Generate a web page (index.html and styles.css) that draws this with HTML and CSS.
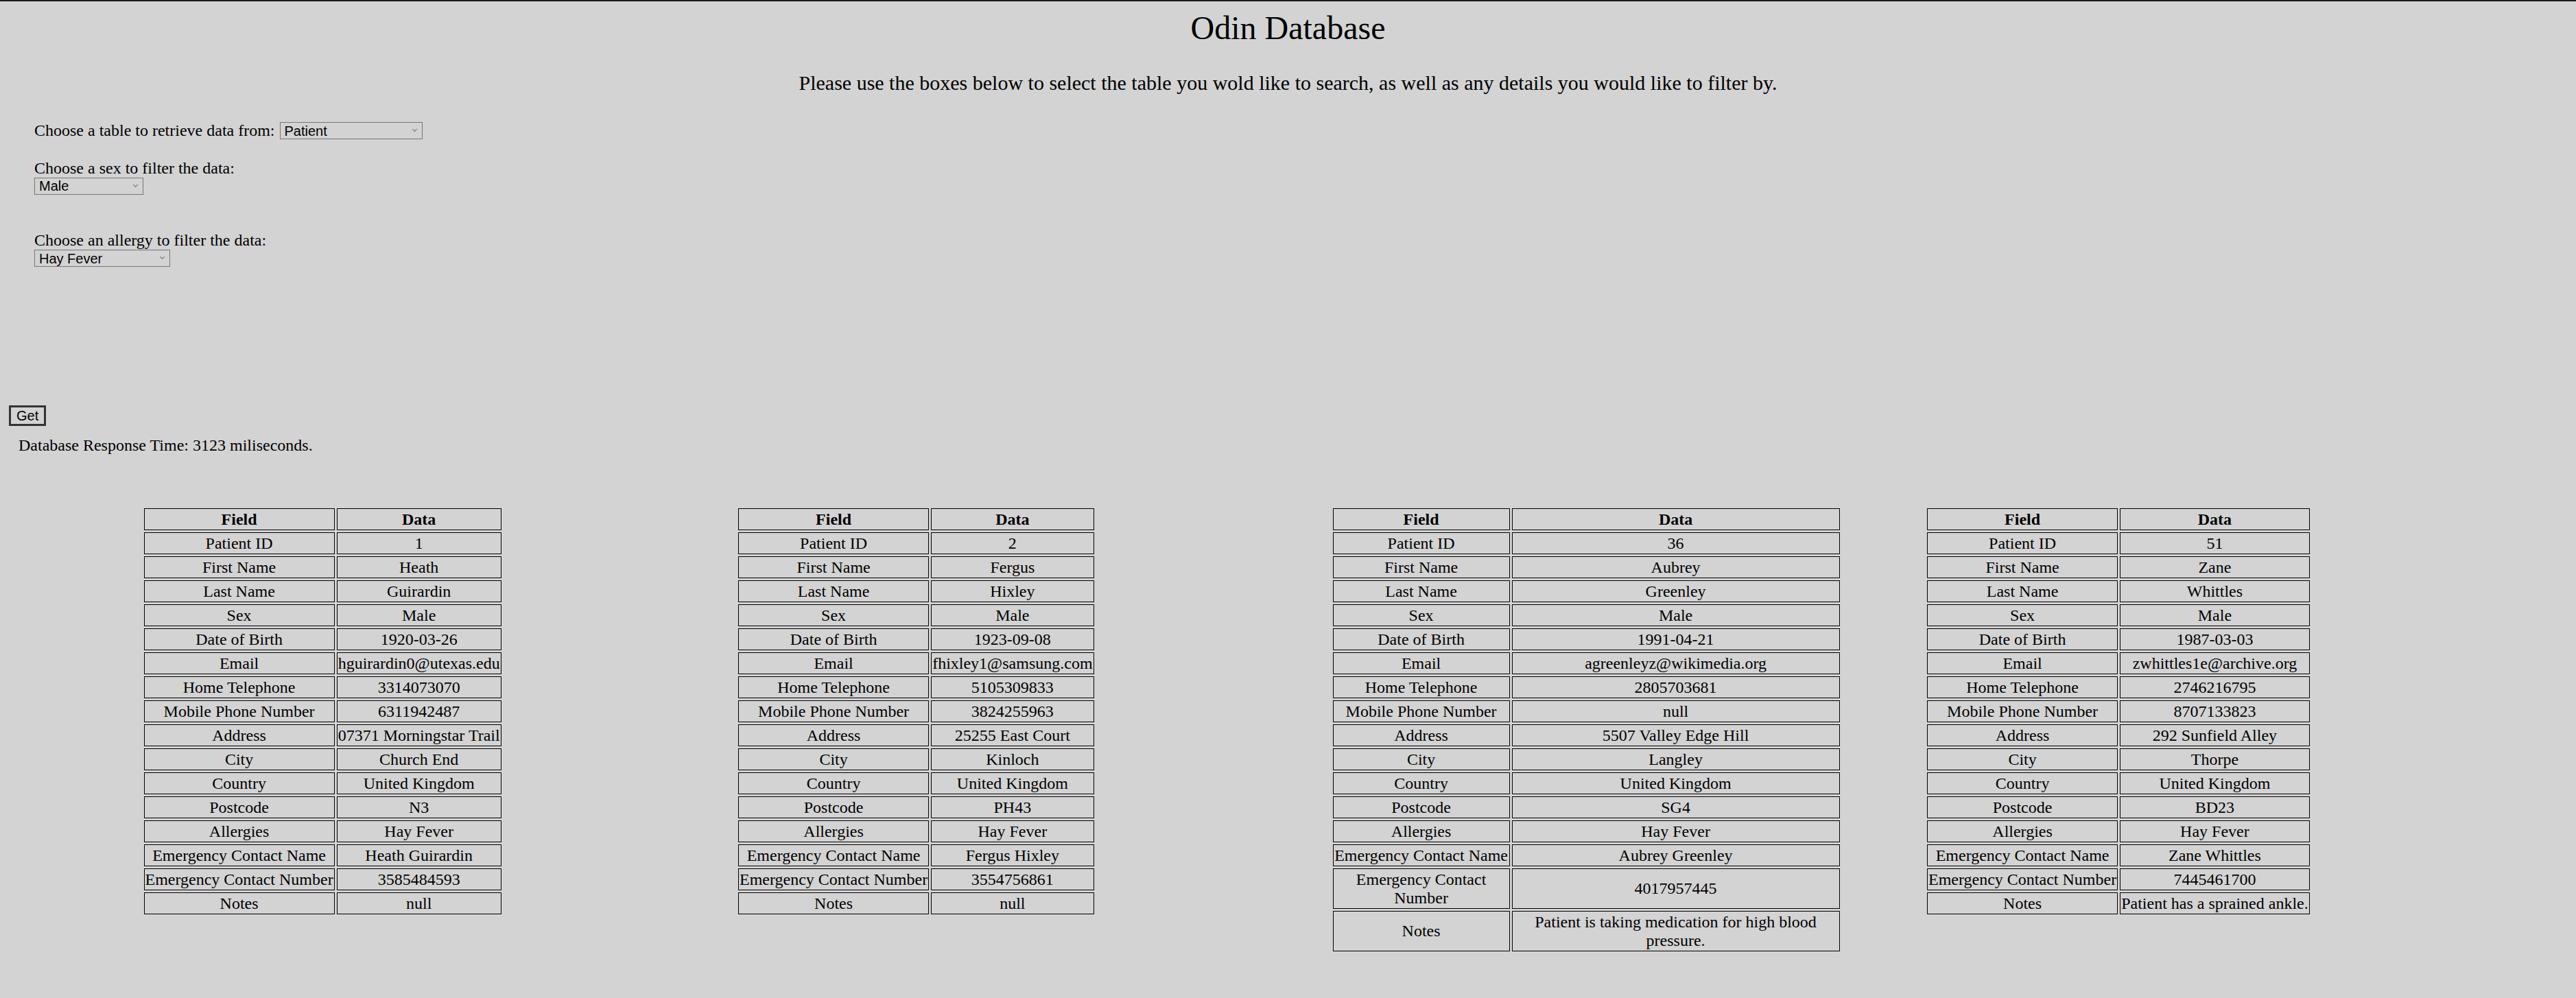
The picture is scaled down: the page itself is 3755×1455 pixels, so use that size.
FILE: index.html
```html
<!DOCTYPE html>
<html lang="en">
<head>
<meta charset="utf-8">
<title>Odin Database</title>
<link rel="stylesheet" href="styles.css">
</head>
<body>
<h1 class="title">Odin Database</h1>
<p class="intro">Please use the boxes below to select the table you wold like to search, as well as any details you would like to filter by.</p>

<form class="filters">
  <div class="row-inline">
    <label for="tbl">Choose a table to retrieve data from:</label>
    <span class="sel-wrap"><select id="tbl" class="sel sel-table"><option>Patient</option></select></span>
  </div>
  <div class="row-block row-sex">
    <label for="sex">Choose a sex to filter the data:</label>
    <span class="sel-wrap"><select id="sex" class="sel sel-sex"><option>Male</option></select></span>
  </div>
  <div class="row-block row-allergy">
    <label for="allergy">Choose an allergy to filter the data:</label>
    <span class="sel-wrap"><select id="allergy" class="sel sel-allergy"><option>Hay Fever</option></select></span>
  </div>
</form>

<button class="get-btn" type="button">Get</button>
<p class="response">Database Response Time: 3123 miliseconds.</p>

<div class="results">
  <div class="result-col">
    <table class="record">
      <tr><th>Field</th><th>Data</th></tr>
      <tr><td>Patient ID</td><td>1</td></tr>
      <tr><td>First Name</td><td>Heath</td></tr>
      <tr><td>Last Name</td><td>Guirardin</td></tr>
      <tr><td>Sex</td><td>Male</td></tr>
      <tr><td>Date of Birth</td><td>1920-03-26</td></tr>
      <tr><td>Email</td><td>hguirardin0@utexas.edu</td></tr>
      <tr><td>Home Telephone</td><td>3314073070</td></tr>
      <tr><td>Mobile Phone Number</td><td>6311942487</td></tr>
      <tr><td>Address</td><td>07371 Morningstar Trail</td></tr>
      <tr><td>City</td><td>Church End</td></tr>
      <tr><td>Country</td><td>United Kingdom</td></tr>
      <tr><td>Postcode</td><td>N3</td></tr>
      <tr><td>Allergies</td><td>Hay Fever</td></tr>
      <tr><td>Emergency Contact Name</td><td>Heath Guirardin</td></tr>
      <tr><td>Emergency Contact Number</td><td>3585484593</td></tr>
      <tr><td>Notes</td><td>null</td></tr>
    </table>
  </div>
  <div class="result-col">
    <table class="record">
      <tr><th>Field</th><th>Data</th></tr>
      <tr><td>Patient ID</td><td>2</td></tr>
      <tr><td>First Name</td><td>Fergus</td></tr>
      <tr><td>Last Name</td><td>Hixley</td></tr>
      <tr><td>Sex</td><td>Male</td></tr>
      <tr><td>Date of Birth</td><td>1923-09-08</td></tr>
      <tr><td>Email</td><td>fhixley1@samsung.com</td></tr>
      <tr><td>Home Telephone</td><td>5105309833</td></tr>
      <tr><td>Mobile Phone Number</td><td>3824255963</td></tr>
      <tr><td>Address</td><td>25255 East Court</td></tr>
      <tr><td>City</td><td>Kinloch</td></tr>
      <tr><td>Country</td><td>United Kingdom</td></tr>
      <tr><td>Postcode</td><td>PH43</td></tr>
      <tr><td>Allergies</td><td>Hay Fever</td></tr>
      <tr><td>Emergency Contact Name</td><td>Fergus Hixley</td></tr>
      <tr><td>Emergency Contact Number</td><td>3554756861</td></tr>
      <tr><td>Notes</td><td>null</td></tr>
    </table>
  </div>
  <div class="result-col">
    <table class="record">
      <tr><th>Field</th><th>Data</th></tr>
      <tr><td>Patient ID</td><td>36</td></tr>
      <tr><td>First Name</td><td>Aubrey</td></tr>
      <tr><td>Last Name</td><td>Greenley</td></tr>
      <tr><td>Sex</td><td>Male</td></tr>
      <tr><td>Date of Birth</td><td>1991-04-21</td></tr>
      <tr><td>Email</td><td>agreenleyz@wikimedia.org</td></tr>
      <tr><td>Home Telephone</td><td>2805703681</td></tr>
      <tr><td>Mobile Phone Number</td><td>null</td></tr>
      <tr><td>Address</td><td>5507 Valley Edge Hill</td></tr>
      <tr><td>City</td><td>Langley</td></tr>
      <tr><td>Country</td><td>United Kingdom</td></tr>
      <tr><td>Postcode</td><td>SG4</td></tr>
      <tr><td>Allergies</td><td>Hay Fever</td></tr>
      <tr><td>Emergency Contact Name</td><td>Aubrey Greenley</td></tr>
      <tr><td>Emergency Contact Number</td><td>4017957445</td></tr>
      <tr><td>Notes</td><td>Patient is taking medication for high blood pressure.</td></tr>
    </table>
  </div>
  <div class="result-col">
    <table class="record">
      <tr><th>Field</th><th>Data</th></tr>
      <tr><td>Patient ID</td><td>51</td></tr>
      <tr><td>First Name</td><td>Zane</td></tr>
      <tr><td>Last Name</td><td>Whittles</td></tr>
      <tr><td>Sex</td><td>Male</td></tr>
      <tr><td>Date of Birth</td><td>1987-03-03</td></tr>
      <tr><td>Email</td><td>zwhittles1e@archive.org</td></tr>
      <tr><td>Home Telephone</td><td>2746216795</td></tr>
      <tr><td>Mobile Phone Number</td><td>8707133823</td></tr>
      <tr><td>Address</td><td>292 Sunfield Alley</td></tr>
      <tr><td>City</td><td>Thorpe</td></tr>
      <tr><td>Country</td><td>United Kingdom</td></tr>
      <tr><td>Postcode</td><td>BD23</td></tr>
      <tr><td>Allergies</td><td>Hay Fever</td></tr>
      <tr><td>Emergency Contact Name</td><td>Zane Whittles</td></tr>
      <tr><td>Emergency Contact Number</td><td>7445461700</td></tr>
      <tr><td>Notes</td><td>Patient has a sprained ankle.</td></tr>
    </table>
  </div>
</div>
</body>
</html>
```

FILE: styles.css
```css
html {
  background: #d3d3d3;
}

body {
  margin: 0;
  padding: 11px 12px 12px;
  border-top: 2px solid #1c1c1c;
  background: #d3d3d3;
  color: #000;
  font-family: "Liberation Serif", "Times New Roman", serif;
  font-size: 24px;
}

.title {
  margin: 0;
  font-size: 48px;
  font-weight: normal;
  text-align: center;
}

.intro {
  margin: 36px 0 0;
  font-size: 30px;
  text-align: center;
}

.filters {
  margin: 39px 0 0;
  padding-left: 38px;
}

.row-inline {
  display: flex;
  align-items: center;
  gap: 7px;
}

.row-block {
  display: flex;
  flex-direction: column;
  align-items: flex-start;
}

.row-sex {
  margin-top: 27.5px;
}

.row-allergy {
  margin-top: 53.5px;
}

.sel-wrap {
  position: relative;
  display: inline-block;
  line-height: 0;
}

.sel-wrap::after {
  content: "";
  position: absolute;
  right: 9px;
  top: 8px;
  width: 4px;
  height: 4px;
  border-right: 1px solid #6f6f6f;
  border-bottom: 1px solid #6f6f6f;
  transform: rotate(45deg);
  pointer-events: none;
}

.sel {
  box-sizing: border-box;
  height: 25px;
  margin: 0;
  padding: 0 20px 0 6px;
  border: 1px solid #767676;
  border-radius: 0;
  background-color: transparent;
  color: #000;
  font-family: "Liberation Sans", Arial, sans-serif;
  font-size: 20px;
  -webkit-appearance: none;
  appearance: none;
}

.sel-table {
  width: 208px;
}

.sel-sex {
  width: 159px;
}

.sel-allergy {
  width: 198px;
}

.get-btn {
  display: block;
  box-sizing: border-box;
  height: 30px;
  margin: 202px 0 0 1px;
  padding: 0 8px;
  border: 3px solid #333;
  border-radius: 0;
  background: #d3d3d3;
  color: #000;
  font-family: "Liberation Sans", Arial, sans-serif;
  font-size: 20px;
}

.response {
  margin: 15px 0 0;
  padding-left: 15px;
}

.results {
  display: grid;
  grid-template-columns: repeat(4, 745px);
  column-gap: 121.5px;
  margin-top: 75px;
  padding-left: 194.5px;
  align-items: start;
}

.record {
  border-spacing: 3px;
  font-size: 24px;
}

.record th,
.record td {
  border: 1px solid #000;
  padding: 1.5px 1px;
  text-align: center;
}

.record th {
  font-weight: bold;
}
```
